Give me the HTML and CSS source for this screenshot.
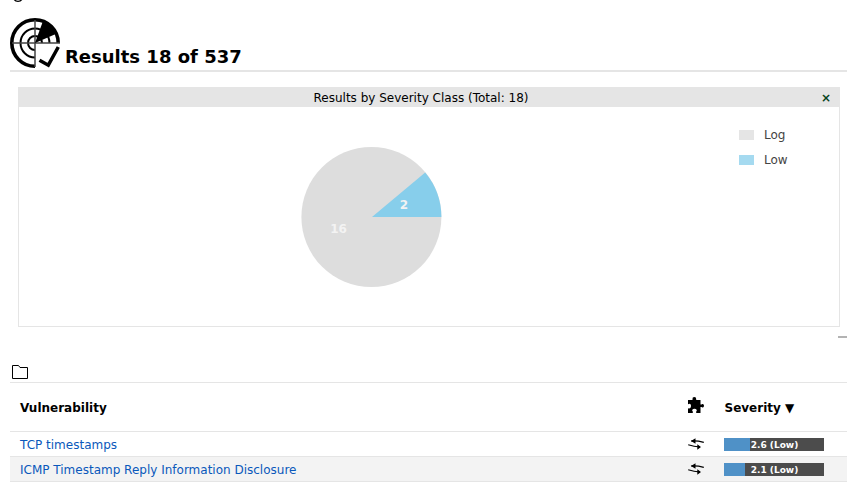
FILE: index.html
```
<!DOCTYPE html>
<html lang="en">
<head>
<meta charset="utf-8">
<title>Results</title>
<link rel="stylesheet" href="styles.css">
</head>
<body>
<div class="toolbar">
  <svg width="12" height="3" viewBox="0 0 12 3"><path d="M1.5-2Q2.5 1.3 6 1.3T10.5-2" fill="none" stroke="#000" stroke-width="1.3"/></svg>
</div>
<header class="page-header">
  <svg class="logo" width="50" height="50" viewBox="0 0 50 50">
    <g fill="none" stroke="#000">
      <path d="M25 48.2A23.200 23.200 0 1 1 48.2 25" stroke-width="3.6"/>
      <path d="M25 39.5A14.5 14.5 0 1 1 39.5 25M25 32A7 7 0 1 1 32 25" stroke-width="2"/>
      <path d="M25 2V49M2 25H50" stroke="#444" stroke-width="1.5"/>
      <path d="M29.500 42.200L38.300 47.200L48.300 29" stroke-width="3.5"/>
    </g>
    <path d="M25 25L33 3Q42 6.500 47 15.500Z"/>
  </svg>
  <h1>Results 18 of 537</h1>
</header>
<section class="panel">
  <div class="panel-head"><span class="panel-title">Results by Severity Class (Total: 18)</span><span class="close">×</span></div>
  <div class="panel-body">
    <svg class="chart" width="141" height="140" viewBox="0 0 141 140">
      <circle cx="70.400" cy="70" r="70" fill="#ddd"/>
      <path d="M71 70H140.400A70 70 0 0 0 124.200 25.500Z" fill="#87ceeb"/>
      <text x="37.500" y="86">16</text>
      <text x="103" y="62">2</text>
    </svg>
    <ul class="legend">
      <li><i class="swatch log"></i><span>Log</span></li>
      <li><i class="swatch low"></i><span>Low</span></li>
    </ul>
  </div>
</section>
<div class="handle"></div>
<div class="folder">
  <svg width="16" height="14" viewBox="0 0 16 14"><path d="M.5.500H6.500L8 2.500H15.500V13.500H.5Z" fill="none" stroke="#000"/></svg>
</div>
<main class="table">
  <div class="row head">
    <span>Vulnerability</span>
    <svg width="16" height="16" viewBox="0 0 16 16"><path d="M0 3H4.500V2Q4.200 0 6.300 0T8.200 2V3H12.500V7.500H13.500Q14 6.800 15 7.100Q16 7.500 16 8.800T15 10.400Q14 10.700 13.500 10H12.500V16H8.200V14.500Q9.200 13.800 8.600 12.700Q8 11.800 6.500 11.800T4.300 12.800Q3.800 13.900 4.800 14.500V16H0V11.200Q1.500 11.800 2.300 11T3 8.500Q2.800 6.800 1.600 6.800L0 7.300Z"/></svg>
    <span class="sorted">Severity ▼</span>
  </div>
  <div class="row">
    <a>TCP timestamps</a>
    <svg width="16" height="12" viewBox="0 0 16 12"><use href="#arrows"/></svg>
    <div class="bar"><i class="fill" style="width:26%"></i><b>2.6 (Low)</b></div>
  </div>
  <div class="row alt">
    <a>ICMP Timestamp Reply Information Disclosure</a>
    <svg width="16" height="12" viewBox="0 0 16 12"><g id="arrows"><path d="M3 3Q9 2.500 15.800 4.300M.2 6.700Q6 8.500 12 9" fill="none" stroke="#000" stroke-width="1.200"/><path d="M3 3L7.500.2V5.800ZM13 9L9.300 6.200V11.800Z"/></g></svg>
    <div class="bar"><i class="fill" style="width:21%"></i><b>2.1 (Low)</b></div>
  </div>
</main>
</body>
</html>
```
FILE: styles.css
```
* { box-sizing: border-box; }
body { margin: 0; background: #fff; color: #000; font: 12px/15px "DejaVu Sans", sans-serif; height: 483px; overflow: hidden; }
svg { display: block; }
.toolbar { height: 18px; padding-left: 12px; }
.page-header { display: flex; margin-left: 10px; height: 54px; border-bottom: 2px solid #e5e5e5; }
h1 { margin: 28px 0 0 5px; font-size: 18px; line-height: 21px; }
.panel { margin: 15px 7px 0 18px; height: 240px; }
.panel-head { display: flex; height: 20px; background: #e5e5e5; line-height: 22px; padding-right: 10px; }
.panel-title { flex: 1; text-align: center; padding-left: 3px; }
.close { width: 9px; font-weight: bold; color: #074320; text-align: center; }
.panel-body { display: flex; justify-content: space-between; height: 220px; border: 1px solid #e5e5e5; border-top: 0; }
.chart { margin: 40px 0 0 282px; }
.chart text { font-weight: bold; fill: #f3f3f3; text-anchor: middle; }
.legend { list-style: none; margin: 20px 50px 0 0; padding: 0; color: #444; width: 50px; }
.legend li { display: flex; align-items: center; height: 15px; margin-bottom: 10px; }
.legend span { padding-top: 2px; }
.swatch { width: 15px; height: 10px; margin-right: 10px; }
.log { background: #e5e5e5; }
.low { background: #a5daf0; }
.handle { width: 9px; height: 2px; margin: 9px 0 0 auto; background: #b3b3b3; }
.folder { height: 44px; padding: 27px 0 0 12px; }
.table { margin-left: 10px; border-top: 1px solid #e5e5e5; }
.row { display: grid; grid-template-columns: 668px 36px 1fr; align-items: center; height: 25px; padding-left: 10px; border-bottom: 1px solid #e5e5e5; }
.row.head { height: 49px; font-weight: bold; }
.head svg { margin-top: -5px; }
.alt { background: #f3f3f3; }
.row > a, .row > span { padding-top: 2px; }
.row > .sorted { padding-left: 0.5px; }
.row a { color: #0a58bb; }
.bar { position: relative; width: 100px; height: 13px; background: #4c4c4c; color: #fff; text-align: center; font-size: 9px; line-height: 15px; padding-left: 1px; }
.fill { position: absolute; left: 0; top: 0; height: 100%; background: #4f91c7; }
.bar b { position: relative; }
```
